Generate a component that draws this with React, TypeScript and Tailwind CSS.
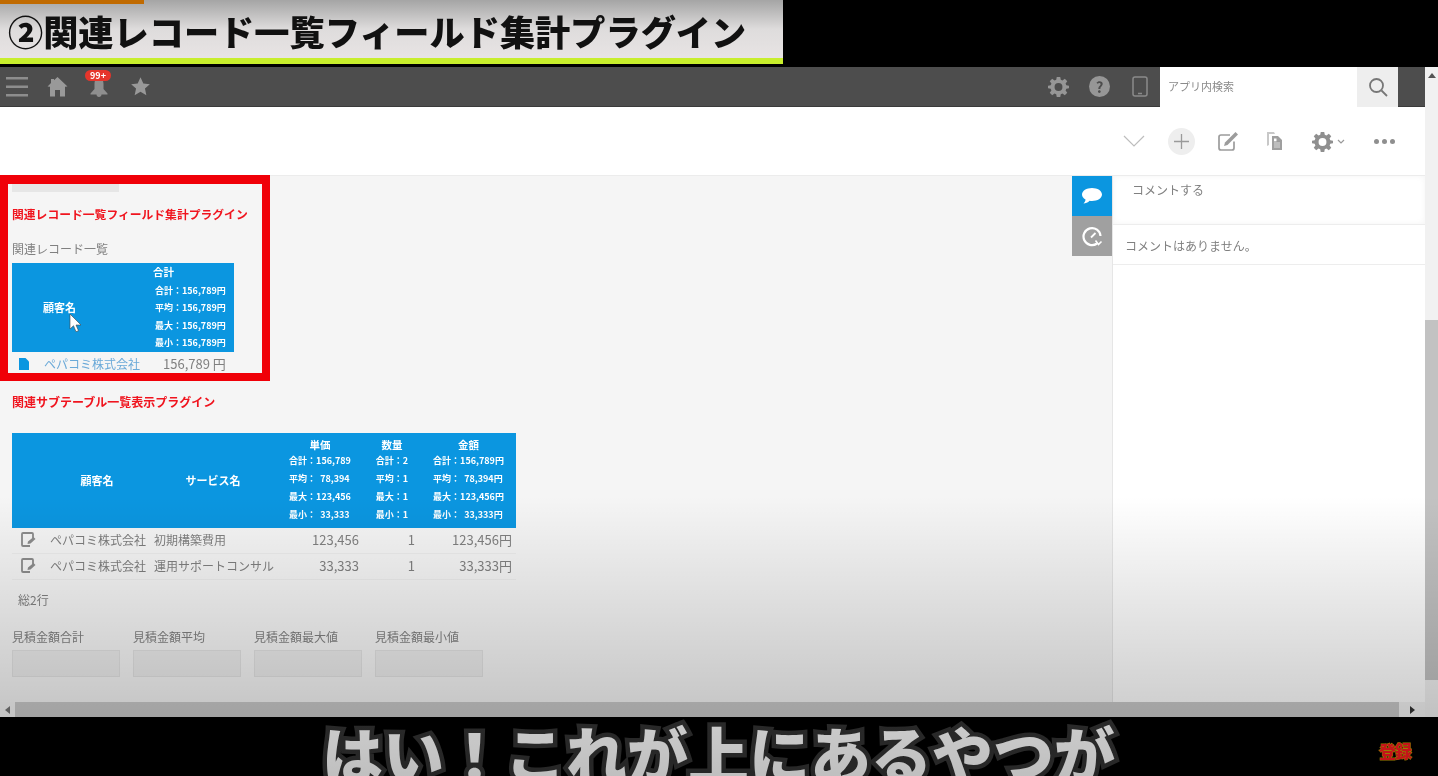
const stats1 = ["合計：156,789円", "平均：156,789円", "最大：156,789円", "最小：156,789円"];

const tableCols = [
  { title: "単価", lines: ["合計：156,789", "平均：  78,394", "最大：123,456", "最小：  33,333"] },
  { title: "数量", lines: ["合計：2", "平均：1", "最大：1", "最小：1"] },
  { title: "金額", lines: ["合計：156,789円", "平均：  78,394円", "最大：123,456円", "最小：  33,333円"] },
];

const rows = [
  { service: "初期構築費用", price: "123,456", total: "123,456円" },
  { service: "運用サポートコンサル", price: "33,333", total: "33,333円" },
];

const summaryFields = ["見積金額合計", "見積金額平均", "見積金額最大値", "見積金額最小値"];

function Gear({ className }: { className: string }) {
  return (
    <svg className={className} viewBox="0 0 24 24" fill="currentColor">
      <path
        fillRule="evenodd"
        d="M10 1h4l.6 3.2 1.900.8L19.200 3.100 22 5.900 20.100 8.600l.8 1.900L24 11v3l-3.100.6-.8 1.900 1.900 2.700-2.800 2.800-2.700-1.900-1.900.8L14 24h-4l-.6-3.100-1.900-.8-2.700 1.900L2 19.200l1.900-2.700-.8-1.900L0 14v-3l3.100-.5.8-1.900L2 5.900 4.800 3.100 7.500 5l1.900-.8L10 1zm2 7a4.500 4.500 0 1 0 0 9 4.500 4.500 0 0 0 0-9z"
      />
    </svg>
  );
}

function Header() {
  return (
    <div className="flex h-[40px] items-center border-b border-[#3a3a3a] bg-[#4d4d4d]">
      <svg className="ml-[6px] h-[22px] w-[22px] text-[#8d8d8d]" viewBox="0 0 22 22" fill="currentColor">
        <rect x="0" y="1" width="22" height="2.500" />
        <rect x="0" y="9.500" width="22" height="2.500" />
        <rect x="0" y="18" width="22" height="2.500" />
      </svg>
      <svg className="ml-[19px] h-[21px] w-[21px] text-[#999999]" viewBox="0 0 21 21" fill="currentColor">
        <path d="M10.500 1 20.500 10.500 18 10.800V20.500h-5v-6.500H8v6.500H3V10.800L.5 10.500 4 7V3h3v1.200z" />
      </svg>
      <div className="relative ml-[20px] flex h-[22px] w-[22px] items-center justify-center">
        <svg className="mt-[2px] h-[20px] w-[22px] text-[#8f8f8f]" viewBox="0 0 22 20" fill="currentColor">
          <path d="M11 0c3 0 4.500 2.500 4.500 6v5l4 4.500v1h-6c0 1.500-1 2.500-2.500 2.500s-2.500-1-2.500-2.500h-6v-1l4-4.500V6C6.500 2.500 8 0 11 0z" />
        </svg>
        <span className="absolute left-[-3px] top-[-6px] flex h-[11px] w-[26px] items-center justify-center rounded-full bg-[#e6352b] text-[9px] font-bold leading-none text-white">
          99+
        </span>
      </div>
      <svg className="ml-[20px] h-[21px] w-[21px] text-[#999999]" viewBox="0 0 24 24" fill="currentColor">
        <path d="m12 1.500 3.200 7 7.500.8-5.600 5.100 1.600 7.500L12 18l-6.700 3.900 1.600-7.500L1.300 9.300l7.500-.8z" />
      </svg>
      <div className="ml-auto flex items-center">
        <Gear className="h-[21px] w-[21px] text-[#969696]" />
        <div className="ml-[20px] flex h-[21px] w-[21px] items-center justify-center rounded-full bg-[#969696] text-[15px] font-bold leading-none text-[#4d4d4d]">
          ?
        </div>
        <svg className="ml-[22px] h-[21px] w-[16px] text-[#8a8a8a]" viewBox="0 0 16 21" fill="none" stroke="currentColor" strokeWidth="1.500">
          <rect x="1" y="1" width="14" height="19" rx="2" />
          <path d="M6 17.500h4" />
        </svg>
        <div className="ml-[12px] flex h-[40px] w-[238px] items-center bg-white">
          <span className="ml-[8px] text-[11px] text-[#8a8a8a]">アプリ内検索</span>
          <div className="ml-auto flex h-full w-[41px] items-center justify-center bg-[#eeeeee]">
            <svg className="h-[20px] w-[20px] text-[#777777]" viewBox="0 0 20 20" fill="none" stroke="currentColor" strokeWidth="1.800">
              <circle cx="8.500" cy="8.500" r="6.500" />
              <path d="m13.500 13.500 5.500 5.500" />
            </svg>
          </div>
        </div>
        <div className="w-[27px]" />
      </div>
    </div>
  );
}

function Toolbar() {
  return (
    <div className="flex h-[69px] items-center justify-end border-b border-[#ececec] bg-white">
      <svg className="h-[12px] w-[22px] text-[#bdbdbd]" viewBox="0 0 22 12" fill="none" stroke="currentColor" strokeWidth="1.200">
        <path d="m1 1 10 10L21 1" />
      </svg>
      <div className="ml-[23px] flex h-[27px] w-[27px] items-center justify-center rounded-full bg-[#eeeeee]">
        <svg className="h-[15px] w-[15px] text-[#9a9a9a]" viewBox="0 0 15 15" fill="none" stroke="currentColor" strokeWidth="1.300">
          <path d="M7.500 0v15M0 7.500h15" />
        </svg>
      </div>
      <svg className="ml-[23px] h-[21px] w-[21px] text-[#9c9c9c]" viewBox="0 0 21 21" fill="none">
        <path d="M16 10.500V17a2 2 0 0 1-2 2H3a2 2 0 0 1-2-2V6a2 2 0 0 1 2-2h9" stroke="currentColor" strokeWidth="1.700" />
        <path d="m6 15 1-3.500L17.500 1l2.500 2.500L9.500 14z" fill="currentColor" />
      </svg>
      <svg className="ml-[27px] h-[20px] w-[18px] text-[#9a9a9a]" viewBox="0 0 18 20" fill="currentColor">
        <path d="M1 1h7l1 2H3v11l-2 1z" opacity="0.550" />
        <path fillRule="evenodd" d="M6 5h6l4 4v10H6zm2 5v7h6v-6h-3.500V7.500H8z" opacity="0.950" />
        <path d="M8 10h6v7H8z" opacity="0.650" />
      </svg>
      <Gear className="ml-[28px] h-[21px] w-[21px] text-[#8f8f8f]" />
      <svg className="ml-[4px] h-[5px] w-[8px] text-[#999999]" viewBox="0 0 8 5" fill="none" stroke="currentColor" strokeWidth="1.200">
        <path d="m1 1 3 3 3-3" />
      </svg>
      <div className="ml-[29px] mr-[30px] flex gap-[3px]">
        <span className="h-[5px] w-[5px] rounded-full bg-[#8f8f8f]" />
        <span className="h-[5px] w-[5px] rounded-full bg-[#8f8f8f]" />
        <span className="h-[5px] w-[5px] rounded-full bg-[#8f8f8f]" />
      </div>
    </div>
  );
}

function RecordTable() {
  return (
    <div className="w-[222px]">
      <div className="flex h-[89px] bg-[#0b96e0] text-white">
        <div className="flex w-[95px] items-center justify-center text-[11px] font-bold">顧客名</div>
        <div className="pl-[48px] pt-[1px]">
          <div className="-ml-[2px] text-[10.500px] font-bold leading-[16px]">合計</div>
          <div className="mt-[2px]">
            {stats1.map((s) => (
              <div key={s} className="whitespace-pre text-[9px] font-bold leading-[17.400px]">{s}</div>
            ))}
          </div>
        </div>
      </div>
      <div className="flex h-[24px] items-center text-[12px]">
        <svg className="ml-[7px] h-[12px] w-[10px] text-[#0b96e0]" viewBox="0 0 10 12" fill="currentColor">
          <path d="M0 0h6.500L10 3.500V12H0z" />
        </svg>
        <span className="ml-[15px] text-[#6aa9d8]">ペパコミ株式会社</span>
        <span className="ml-[23px] text-[13px] text-[#808080]">156,789 円</span>
      </div>
    </div>
  );
}

function ListTable() {
  return (
    <div className="w-[504px]">
      <div className="grid h-[95px] grid-cols-[33px_104px_128px_86px_58px_95px] items-center bg-[#0b96e0] text-white">
        <div />
        <div className="text-center text-[11px] font-bold">顧客名</div>
        <div className="text-center text-[11px] font-bold">サービス名</div>
        {tableCols.map((col) => (
          <div key={col.title} className="flex flex-col items-center">
            <div className="-mt-[1px] text-[10.500px] font-bold leading-[15px]">{col.title}</div>
            <div>
              {col.lines.map((l) => (
                <div key={l} className="whitespace-pre text-[9px] font-bold leading-[18px]">{l}</div>
              ))}
            </div>
          </div>
        ))}
      </div>
      {rows.map((r) => (
        <div
          key={r.service}
          className="grid h-[26px] grid-cols-[33px_102px_127px_86px_57px_98px] items-center border-b border-[#ececec] pb-[2px] text-[12px] text-[#808080]"
        >
          <div className="flex justify-center">
            <svg className="h-[15px] w-[15px] text-[#8c8c8c]" viewBox="0 0 15 15" fill="none">
              <path d="M12 6V2a1 1 0 0 0-1-1H2a1 1 0 0 0-1 1v11a1 1 0 0 0 1 1h7" stroke="currentColor" strokeWidth="1.800" />
              <path d="m6.500 12 .5-2.500L12.500 5l2 2-5 4.500z" fill="currentColor" />
            </svg>
          </div>
          <div className="whitespace-nowrap pl-[5px] text-[#7d7d7d]">ペパコミ株式会社</div>
          <div className="whitespace-nowrap pl-[7px]">{r.service}</div>
          <div className="pr-[1px] text-right text-[13px]">{r.price}</div>
          <div className="pr-[2px] text-right text-[13px]">1</div>
          <div className="pr-[3px] text-right text-[13px]">{r.total}</div>
        </div>
      ))}
    </div>
  );
}

function Form() {
  return (
    <div className="relative flex-1 bg-[#f5f5f5] pl-[12px] pt-[8px]">
      <div className="h-[8px] w-[107px] bg-[#e6e6e6]" />
      <div className="mt-[13px] text-[11.800px] font-bold leading-[18px] text-[#f0141e]">関連レコード一覧フィールド集計プラグイン</div>
      <div className="mt-[17px] text-[12px] leading-[18px] text-[#808080]">関連レコード一覧</div>
      <div className="mt-[5px]">
        <RecordTable />
      </div>
      <div className="mt-[17px] text-[12px] font-bold leading-[18px] text-[#f0141e]">関連サブテーブル一覧表示プラグイン</div>
      <div className="mt-[22px]">
        <ListTable />
      </div>
      <div className="ml-[6px] mt-[11px] text-[12px] leading-[18px] text-[#808080]">総2行</div>
      <div className="mt-[19px] flex gap-[13px]">
        {summaryFields.map((f) => (
          <div key={f} className="w-[108px]">
            <div className="whitespace-nowrap text-[12px] leading-[18px] text-[#808080]">{f}</div>
            <div className="mt-[4px] h-[27px] border border-[#e2e2e2] bg-[#ececec]" />
          </div>
        ))}
      </div>
      {/* red highlight from the video edit */}
      <div className="pointer-events-none absolute left-0 top-[-1px] h-[206px] w-[270px] border-[8px] border-t-[9px] border-[#f00008]" />
      <svg className="pointer-events-none absolute left-[69px] top-[137px] h-[20px] w-[14px]" viewBox="0 0 14 20" fill="#ffffff" stroke="#444444" strokeWidth="0.600">
        <path d="M1 1v15l3.500-3.300 2.500 6 2.500-1-2.500-5.700h5z" />
      </svg>
    </div>
  );
}

function Side() {
  return (
    <div className="flex w-[353px]">
      <div className="w-[40px] bg-[#f5f5f5]">
        <div className="flex h-[40px] items-center justify-center bg-[#0b96e0]">
          <svg className="h-[18px] w-[22px] text-white" viewBox="0 0 22 18" fill="currentColor">
            <path d="M11 1c5.500 0 10 2.800 10 6.500S16.500 14 11 14c-.8 0-1.600-.1-2.400-.2C7 15.500 4.500 16.500 2.500 16.500 3.800 15.200 4.500 14 4.500 12.500 2.300 11.400 1 9.600 1 7.500 1 3.800 5.500 1 11 1z" />
          </svg>
        </div>
        <div className="flex h-[40px] items-center justify-center bg-[#a0a0a0]">
          <svg className="h-[22px] w-[22px] text-white" viewBox="0 0 22 22" fill="none" stroke="currentColor" strokeWidth="2.200">
            <path d="M16 18.500A8.500 8.500 0 1 1 19.500 11" />
            <path d="M10 12.500 14.500 8" strokeWidth="1.800" />
            <path d="m14.500 15.500 3 4 3-3" strokeWidth="1.600" />
          </svg>
        </div>
      </div>
      <div className="flex-1 border-l border-[#e6e6e6] bg-white">
        <div className="h-[49px] border-b border-[#ededed] pl-[19px] text-[12px] leading-[28px] text-[#808080] shadow-[inset_0_0_6px_#f4f4f4]">コメントする</div>
        <div className="h-[40px] border-b border-[#ededed] pl-[12px] pt-[12px] text-[12px] leading-[18px] text-[#808080]">コメントはありません。</div>
      </div>
    </div>
  );
}

export default function App() {
  return (
    <div className="relative flex h-screen w-full flex-col overflow-hidden bg-black blur-[0.4px] [font-family:'Noto_Sans_CJK_JP','Noto_Sans',sans-serif]">
      <div className="h-[67px] shrink-0">
        <div className="h-[64px] w-[783px] border-b-[6px] border-[#c8ee2c] bg-gradient-to-b from-[#a5a5a5] via-[#dedcdc] to-[#e8e4e4]">
          <div className="h-[4px] w-[144px] bg-[#c06a00]" />
          <div className="whitespace-nowrap pl-[8px] pt-[4px] text-[35.200px] font-black leading-[46px] text-[#111111]">②関連レコード一覧フィールド集計プラグイン</div>
        </div>
      </div>

      <div className="flex h-[650px] shrink-0">
        <div className="flex w-[1425px] flex-col">
          <Header />
          <Toolbar />
          <div className="flex flex-1">
            <Form />
            <Side />
          </div>
          <div className="flex h-[15px] items-center bg-[#cacaca]">
            <div className="flex h-full w-[15px] items-center justify-center bg-[#f4f4f4] text-[#777777]">
              <span className="h-0 w-0 border-y-[4px] border-r-[5px] border-y-transparent border-r-current" />
            </div>
            <div className="ml-auto flex h-full w-[26px] items-center justify-center bg-[#f4f4f4] text-[#333333]">
              <span className="h-0 w-0 border-y-[4px] border-l-[5px] border-y-transparent border-l-current" />
            </div>
          </div>
        </div>
        <div className="flex w-[13px] flex-col bg-[#f1f1f1]">
          <div className="flex h-[16px] items-center justify-center text-[#555555]">
            <span className="h-0 w-0 border-x-[4px] border-b-[5px] border-x-transparent border-b-current" />
          </div>
          <div className="mt-[237px] h-[360px] bg-[#c2c2c2]" />
        </div>
      </div>

      <div className="flex h-[59px] shrink-0 items-start">
        <div className="ml-[322px] mt-[1px] whitespace-nowrap text-[61px] font-black leading-[70px] text-white [-webkit-text-stroke:9px_#333333] [paint-order:stroke_fill]">はい！これが上にあるやつが</div>
        <div className="absolute left-[1379px] top-[741px] text-[17px] font-black leading-[20px] tracking-[-1px] text-[#ff1a20] [-webkit-text-stroke:1px_#c9a000] [paint-order:stroke_fill]">登録</div>
      </div>

      {/* video player fade over the bottom */}
      <div className="pointer-events-none absolute inset-x-0 bottom-0 h-[280px] bg-gradient-to-b from-transparent to-black/25" />
    </div>
  );
}
